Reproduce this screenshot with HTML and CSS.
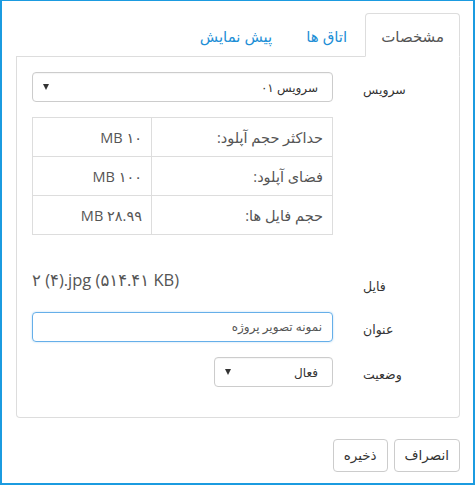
FILE: index.html
```html
<!DOCTYPE html>
<html lang="fa" dir="rtl">
<head>
<meta charset="utf-8">
<title>مشخصات</title>
<link rel="stylesheet" href="styles.css">
</head>
<body>
<div class="frame">
  <ul class="tabs">
    <li class="tab active">مشخصات</li>
    <li class="tab">اتاق ها</li>
    <li class="tab">پیش نمایش</li>
  </ul>
  <div class="panel">
    <div class="row">
      <div class="label">سرویس</div>
      <div class="control">
        <div class="select wide"><span class="sel-text">سرویس ۰۱</span><span class="caret"></span></div>
      </div>
    </div>
    <div class="row">
      <div class="label"></div>
      <div class="control">
        <table class="info">
          <tr><td class="k">حداکثر حجم آپلود:</td><td class="v">MB ۱۰</td></tr>
          <tr><td class="k">فضای آپلود:</td><td class="v">MB ۱۰۰</td></tr>
          <tr><td class="k">حجم فایل ها:</td><td class="v">MB ۲۸.۹۹</td></tr>
        </table>
      </div>
    </div>
    <div class="row file-row">
      <div class="label file-label">فایل</div>
      <div class="control"><div class="file-value" dir="ltr">۲ (۴).jpg (۵۱۴.۴۱ KB)</div></div>
    </div>
    <div class="row">
      <div class="label">عنوان</div>
      <div class="control"><div class="input">نمونه تصویر پروژه</div></div>
    </div>
    <div class="row">
      <div class="label">وضعیت</div>
      <div class="control">
        <div class="select narrow"><span class="sel-text">فعال</span><span class="caret"></span></div>
      </div>
    </div>
  </div>
  <div class="actions">
    <div class="btn">انصراف</div>
    <div class="btn">ذخیره</div>
  </div>
</div>
</body>
</html>
```
FILE: styles.css
```css
html, body {
  margin: 0;
  padding: 0;
  background: #fff;
}
body {
  font-family: "Open Sans", "DejaVu Sans", sans-serif;
  font-size: 13px;
  color: #333;
}
.frame {
  width: 475px;
  height: 485px;
  box-sizing: border-box;
  border-style: solid;
  border-color: #1b9be0;
  border-width: 1px 2px 2px 2px;
  padding: 12px 13px 0 14px;
}
.tabs {
  list-style: none;
  margin: 0;
  padding: 0;
  display: flex;
  gap: 2px;
  border-bottom: 1px solid #ddd;
  height: 43px;
}
.tab {
  padding: 0 16px;
  height: 43px;
  line-height: 46px;
  font-size: 15px;
  color: #1e8fd6;
  box-sizing: border-box;
}
.tab.active {
  color: #555;
  background: #fff;
  border: 1px solid #ddd;
  border-bottom-color: transparent;
  border-radius: 4px 4px 0 0;
  height: 44px;
  line-height: 45px;
  padding: 0 15px;
}
.panel {
  border: 1px solid #ddd;
  border-top: none;
  border-radius: 0 0 4px 4px;
  padding: 15px 0 30px 0;
}
.row {
  display: flex;
  margin-bottom: 15px;
}
.row:last-child {
  margin-bottom: 0;
}
.label {
  width: 96px;
  box-sizing: border-box;
  padding: 8px 0 0 0;
  line-height: 20px;
  text-align: left;
  font-size: 12.5px;
  color: #333;
}
.control {
  width: 301px;
  padding-right: 30px;
  display: flex;
}
.select {
  height: 30px;
  box-sizing: border-box;
  border: 1px solid #ccc;
  border-radius: 4px;
  display: flex;
  align-items: center;
  justify-content: space-between;
  padding: 0 14px 0 10px;
  font-size: 12px;
  color: #333;
  background: #fff;
  box-shadow: inset 0 1px 1px rgba(0,0,0,0.04);
}
.select.wide { width: 301px; }
.select.narrow { width: 119px; }
.caret {
  width: 0;
  height: 0;
  border-left: 3.5px solid transparent;
  border-right: 3.5px solid transparent;
  border-top: 6px solid #333;
}
.info {
  width: 301px;
  border-collapse: collapse;
  font-size: 14.5px;
  color: #555;
}
.info td {
  border: 1px solid #ddd;
  height: 39px;
  box-sizing: border-box;
  padding: 0 9px 0 8px;
  text-align: right;
  vertical-align: middle;
}
.info td.k { width: 181px; }
.file-row .file-label {
  padding-top: 27px;
}
.file-value {
  padding-top: 20px;
  line-height: 20px;
  font-size: 16.5px;
  color: #555;
  width: 301px;
  text-align: left;
}
.input {
  width: 301px;
  height: 30px;
  box-sizing: border-box;
  border: 1px solid #66afe9;
  border-radius: 4px;
  padding: 0 10px;
  line-height: 28px;
  font-size: 12px;
  color: #555;
  box-shadow: 0 0 2px rgba(102,175,233,0.5);
}
.actions {
  display: flex;
  gap: 6px;
  margin-top: 21px;
}
.btn {
  height: 33px;
  box-sizing: border-box;
  border: 1px solid #ccc;
  border-radius: 4px;
  padding: 0 10px;
  line-height: 31px;
  font-size: 13.5px;
  color: #333;
  background: #fff;
}
```
